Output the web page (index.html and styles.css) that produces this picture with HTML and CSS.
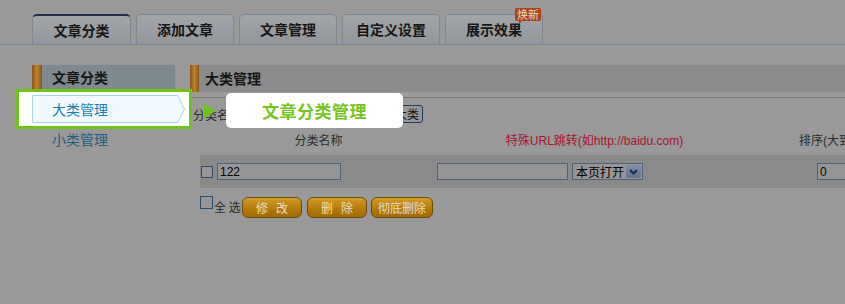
FILE: index.html
```html
<!DOCTYPE html>
<html lang="zh-CN">
<head>
<meta charset="utf-8">
<title>文章分类</title>
<link rel="stylesheet" href="styles.css">
</head>
<body>
<div class="page">
  <div class="tabs">
    <div class="tab active">文章分类</div>
    <div class="tab">添加文章</div>
    <div class="tab">文章管理</div>
    <div class="tab">自定义设置</div>
    <div class="tab">展示效果<span class="badge">焕新</span></div>
  </div>
  <div class="content">
    <div class="side">
      <div class="side-head">文章分类</div>
      <div class="side-item first">大类管理</div>
      <div class="side-item">小类管理</div>
    </div>
    <div class="main">
      <div class="main-head">大类管理</div>
      <div class="add-row">
        <span class="lbl">分类名称：</span>
        <input class="txt add-input" type="text">
        <button class="add-btn" type="button">添加大类</button>
      </div>
      <div class="thead">
        <div class="c1">分类名称</div>
        <div class="c2 red">特殊URL跳转(如http://baidu.com)</div>
        <div class="c3">排序(大到小)</div>
      </div>
      <div class="trow">
        <div class="c1 cell">
          <input class="chk row-chk" type="checkbox">
          <input class="txt name-input" type="text" value="122">
        </div>
        <div class="c2 cell">
          <input class="txt url-input" type="text">
          <div class="sel"><span>本页打开</span><span class="sel-arrow"><svg width="9" height="6" viewBox="0 0 9 6"><path d="M1 1 L4.5 4.5 L8 1" fill="none" stroke="#1b2a48" stroke-width="2"/></svg></span></div>
        </div>
        <div class="c3 cell">
          <input class="txt sort-input" type="text" value="0">
        </div>
      </div>
      <div class="ops">
        <input class="chk all-chk" type="checkbox">
        <span class="all">全 选</span>
        <button class="gbtn w60" type="button">修&nbsp;&nbsp;&nbsp;改</button>
        <button class="gbtn w60 gap5" type="button">删&nbsp;&nbsp;&nbsp;除</button>
        <button class="gbtn w62 gap4" type="button">彻底删除</button>
      </div>
    </div>
  </div>
</div>

<div class="guide-box">
  <div class="guide-item">
    <svg class="guide-shape" width="153" height="28" viewBox="0 0 153 28"><polygon points="0.5,0.5 145.5,0.5 152.5,14 145.5,27.5 0.5,27.5" fill="#f2faff" stroke="#a9d3ea"/></svg>
    <span class="guide-text">大类管理</span>
  </div>
</div>
<div class="guide-arrow"></div>
<div class="guide-tip">文章分类管理</div>
</body>
</html>
```

FILE: styles.css
```css
html, body {
  margin: 0;
  padding: 0;
}
body {
  width: 845px;
  height: 304px;
  overflow: hidden;
  background: #999999;
  font-family: "Liberation Sans", "Noto Sans CJK SC", sans-serif;
  font-size: 12px;
  color: #222;
  position: relative;
}
.page {
  width: 1000px;
}

/* tabs */
.tabs {
  display: flex;
  gap: 5px;
  margin-top: 14px;
  padding-left: 32px;
  height: 30px;
  border-bottom: 1px solid #788a98;
}
.tab {
  position: relative;
  width: 98px;
  height: 30px;
  box-sizing: border-box;
  border: 1px solid #7b8894;
  border-bottom: none;
  border-radius: 5px 5px 0 0;
  background: linear-gradient(#a3a6a9, #92969a);
  text-align: center;
  line-height: 29px;
  font-family: "Noto Sans CJK SC", sans-serif;
  font-size: 14px;
  font-weight: bold;
  color: #161616;
}
.tab.active {
  width: 99px;
  border-top: 2px solid #1f3249;
  line-height: 28px;
}
.badge {
  position: absolute;
  left: 69px;
  top: -7px;
  height: 13px;
  line-height: 13px;
  padding: 0 2px;
  background: #a8461a;
  border-radius: 2px;
  color: #f1d6c2;
  font-size: 11px;
  font-weight: normal;
}
.badge::after {
  content: "";
  position: absolute;
  left: 4px;
  bottom: -3px;
  border-left: 3px solid #a8461a;
  border-bottom: 3px solid transparent;
}

/* content */
.content {
  display: flex;
  margin-top: 20px;
  padding-left: 32px;
}
.side {
  width: 143px;
  flex: none;
  margin-right: 15px;
}
.side-head {
  height: 25px;
  line-height: 25px;
  padding-left: 20px;
  background: linear-gradient(to right, #8a5416, #c0822e 50%, #8a5416) left top / 10px 100% no-repeat, #7f8a90;
  font-family: "Noto Sans CJK SC", sans-serif;
  font-size: 14px;
  font-weight: bold;
  color: #151515;
}
.side-item {
  height: 30px;
  line-height: 30px;
  padding-left: 20px;
  font-family: "Noto Sans CJK SC", sans-serif;
  font-size: 14px;
  color: #1f5f80;
}
.side-item.first {
  margin-top: 4px;
}

.main {
  width: 800px;
  flex: none;
}
.main-head {
  height: 27px;
  line-height: 27px;
  padding-left: 15px;
  margin-bottom: 5px;
  background: linear-gradient(to right, #8a5416, #c0822e 50%, #8a5416) left top / 9px 100% no-repeat, #8b8b8b;
  font-family: "Noto Sans CJK SC", sans-serif;
  font-size: 14px;
  font-weight: bold;
  color: #151515;
}
.add-row {
  height: 32px;
  border-top: 1px solid #787878;
  display: flex;
  align-items: center;
  padding-left: 3px;
}
.lbl {
  color: #2a2a2a;
}
.add-input {
  width: 110px;
  margin-left: 2px;
}
.add-btn {
  margin-left: 4px;
  width: 56px;
  height: 18px;
  padding: 0;
  border: 1px solid #20385a;
  border-radius: 3px;
  background: #979797;
  font-family: "Noto Sans CJK SC", sans-serif;
  font-size: 12px;
  line-height: 16px;
  color: #111;
}

.thead {
  display: flex;
  height: 25px;
  line-height: 22px;
  margin-left: 10px;
  color: #2b2b2b;
}
.thead > div {
  text-align: center;
}
.c1 { width: 237px; flex: none; }
.c2 { width: 315px; flex: none; }
.c3 { width: 162px; flex: none; }
.red { color: #a4122e; }

.trow {
  display: flex;
  align-items: center;
  height: 33px;
  margin-left: 10px;
  background: #8a8a8a;
}
.cell {
  display: flex;
  align-items: center;
}
.chk {
  -webkit-appearance: none;
  appearance: none;
  margin: 0;
  box-sizing: border-box;
  width: 12px;
  height: 12px;
  border: 1px solid #2c4a6c;
  background: #979797;
}
.row-chk {
  margin-left: 1px;
  margin-right: 4px;
}
.txt {
  box-sizing: border-box;
  height: 17px;
  margin: 0;
  padding: 0 2px;
  border: 1px solid #4d627a;
  background: #969696;
  font-family: "Liberation Sans", sans-serif;
  font-size: 12px;
  color: #000;
  outline: none;
}
.name-input { width: 124px; }
.url-input { width: 131px; }
.sort-input { width: 60px; margin-left: 65px; }
.sel {
  box-sizing: border-box;
  width: 71px;
  height: 17px;
  margin-left: 4px;
  padding: 0 1px 0 3px;
  border: 1px solid #4d627a;
  background: #969696;
  display: flex;
  align-items: center;
  justify-content: space-between;
  font-family: "Noto Sans CJK SC", sans-serif;
  font-size: 12px;
  line-height: 15px;
  color: #000;
}
.sel-arrow {
  width: 15px;
  height: 13px;
  border-radius: 2px;
  background: linear-gradient(#8090ac, #62728f);
  display: flex;
  align-items: center;
  justify-content: center;
}

.ops {
  display: flex;
  align-items: flex-start;
  margin: 8px 0 0 10px;
}
.all-chk {
  width: 13px;
  height: 13px;
}
.all {
  margin: 4px 0 0 1px;
  width: 28px;
  line-height: 14px;
  font-family: "Noto Sans CJK SC", sans-serif;
  color: #2a2a2a;
  white-space: nowrap;
}
.gbtn {
  margin-top: 1px;
  height: 21px;
  padding: 0;
  border: 1px solid #6e4a06;
  border-radius: 6px;
  background: linear-gradient(#d39c28, #b47c0a 55%, #a06a04);
  font-family: "Noto Sans CJK SC", sans-serif;
  font-size: 12px;
  line-height: 19px;
  color: #eadfc6;
}
.w60 { width: 60px; }
.w62 { width: 62px; }
.gap5 { margin-left: 5px; }
.gap4 { margin-left: 4px; }

/* guide overlay */
.guide-box {
  position: absolute;
  left: 16px;
  top: 89px;
  width: 176px;
  height: 40px;
  box-sizing: border-box;
  border: 3px solid #6ec21a;
  background: #fff;
}
.guide-item {
  position: relative;
  margin: 3px 0 0 13px;
  width: 153px;
  height: 28px;
}
.guide-shape {
  position: absolute;
  left: 0;
  top: 0;
}
.guide-text {
  position: relative;
  display: block;
  padding-left: 20px;
  line-height: 28px;
  font-family: "Noto Sans CJK SC", sans-serif;
  font-size: 14px;
  color: #1a7db8;
}
.guide-arrow {
  position: absolute;
  left: 203px;
  top: 103px;
  width: 0;
  height: 0;
  border-left: 13px solid #6ec21a;
  border-top: 8px solid transparent;
  border-bottom: 8px solid transparent;
}
.guide-tip {
  position: absolute;
  left: 226px;
  top: 93px;
  width: 177px;
  height: 35px;
  border-radius: 5px;
  background: #fff;
  text-align: center;
  line-height: 35px;
  font-family: "Noto Sans CJK SC", sans-serif;
  font-size: 17px;
  font-weight: bold;
  letter-spacing: 0.5px;
  color: #76c423;
}
```
